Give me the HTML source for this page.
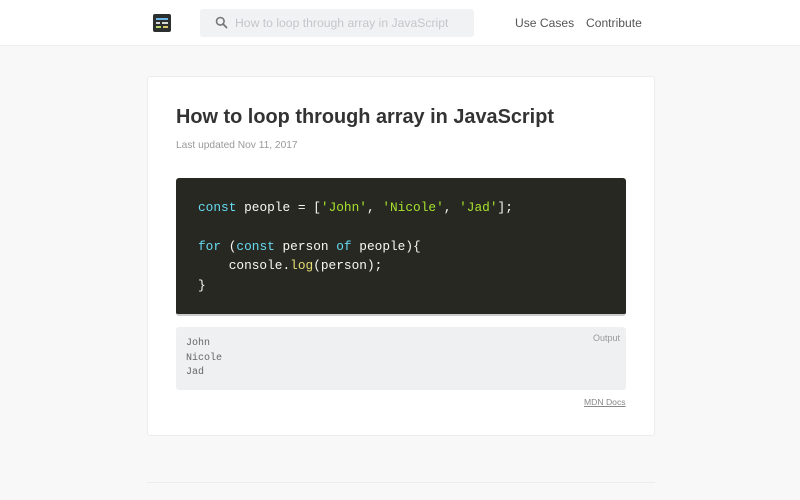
<!DOCTYPE html>
<html><head><style>
*{margin:0;padding:0;box-sizing:border-box}
body{width:800px;height:500px;background:#f8f8f8;font-family:"Liberation Sans",sans-serif;position:relative;overflow:hidden}
.hdr{position:absolute;left:0;top:0;width:800px;height:46px;background:#fff;border-bottom:1px solid #eee}
.logo{position:absolute;left:153px;top:14px;width:18px;height:18px;background:#2b2f2e;border-radius:2px}
.logo i{position:absolute;height:1.5px}
.search{position:absolute;left:200px;top:9px;width:274px;height:28px;background:#f1f2f3;border-radius:3px}
.search span{position:absolute;left:35px;top:7px;font-size:12.2px;color:#c4c7ca}
.nav{position:absolute;top:16px;font-size:12.1px;color:#555}
.card{position:absolute;left:147px;top:76px;width:508px;height:360px;background:#fff;border:1px solid #ececec;border-radius:3px}
h1{position:absolute;left:176px;top:106px;font-size:19.9px;color:#333;font-weight:bold}
.date{position:absolute;left:176px;top:140px;font-size:10.2px;color:#999}
.code{position:absolute;left:176px;top:178px;width:450px;height:138px;background:#272822;border-radius:3px;border-bottom:2px solid #ccc}
pre{font-family:"Liberation Mono",monospace;font-size:12.8px;line-height:19.4px;color:#f8f8f2;position:absolute;left:22px;top:20px}
.k{color:#66d9ef}.s{color:#a6e22e}.f{color:#e6db74}
.out{position:absolute;left:176px;top:327px;width:450px;height:63px;background:#eff0f2;border-radius:3px}
.out pre{font-size:10px;line-height:14.6px;color:#666;left:10px;top:10px}
.out .lbl{position:absolute;right:6px;top:6px;font-size:9px;color:#999}
.mdn{position:absolute;left:584px;top:397px;font-size:8.6px;color:#888;text-decoration:underline}
.line{position:absolute;left:147px;top:482px;width:508px;height:1px;background:#ececec}
</style></head><body>
<div class="hdr">
<div class="logo"><i style="left:3px;top:4px;width:12px;background:#6fb6e8"></i><i style="left:3px;top:8px;width:4px;background:#d8d8d8"></i><i style="left:9px;top:8px;width:6px;background:#d8d8d8"></i><i style="left:3px;top:12px;width:5px;background:#b8d86c"></i><i style="left:10px;top:12px;width:5px;background:#d8c86c"></i></div>
<div class="search"><svg style="position:absolute;left:15px;top:7px" width="13" height="13" viewBox="0 0 13 13"><circle cx="5.3" cy="5.3" r="3.8" fill="none" stroke="#777" stroke-width="1.6"/><path d="M8 8l3.5 3.5" stroke="#777" stroke-width="1.8" stroke-linecap="round"/></svg><span>How to loop through array in JavaScript</span></div>
<div class="nav" style="left:515px">Use Cases</div>
<div class="nav" style="left:586px">Contribute</div>
</div>
<div class="card"></div>
<h1>How to loop through array in JavaScript</h1>
<div class="date">Last updated Nov 11, 2017</div>
<div class="code"><pre><span class="k">const</span> people = [<span class="s">'John'</span>, <span class="s">'Nicole'</span>, <span class="s">'Jad'</span>];

<span class="k">for</span> (<span class="k">const</span> person <span class="k">of</span> people){
    console.<span class="f">log</span>(person);
}</pre></div>
<div class="out"><pre>John
Nicole
Jad</pre><div class="lbl">Output</div></div>
<div class="mdn">MDN Docs</div>
<div class="line"></div>
</body></html>
